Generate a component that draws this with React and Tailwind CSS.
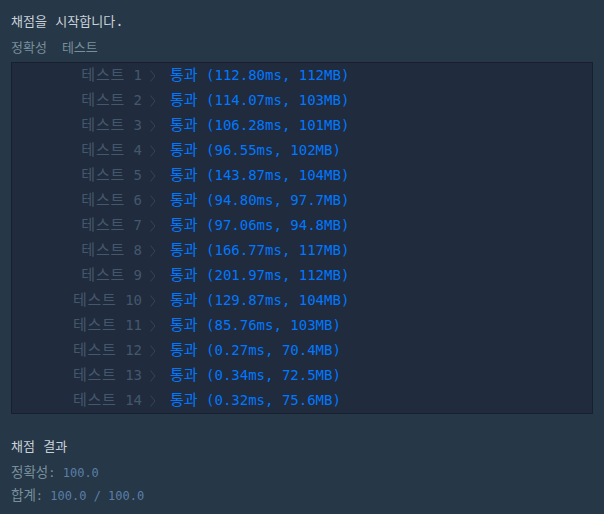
const ROWS = [
  ['1', '112.80ms, 112MB'],
  ['2', '114.07ms, 103MB'],
  ['3', '106.28ms, 101MB'],
  ['4', '96.55ms, 102MB'],
  ['5', '143.87ms, 104MB'],
  ['6', '94.80ms, 97.7MB'],
  ['7', '97.06ms, 94.8MB'],
  ['8', '166.77ms, 117MB'],
  ['9', '201.97ms, 112MB'],
  ['10', '129.87ms, 104MB'],
  ['11', '85.76ms, 103MB'],
  ['12', '0.27ms, 70.4MB'],
  ['13', '0.34ms, 72.5MB'],
  ['14', '0.32ms, 75.6MB'],
];

const Chevron = () => (
  <svg width="8" height="14" viewBox="0 0 8 14" className="shrink-0 block">
    <polyline points="1.5,1.5 6,7 1.5,12.5" fill="none" stroke="#34455a" strokeWidth="1" />
  </svg>
);

// 한글은 Noto CJK 폭이 원본보다 좁아서 조금 크게 잡음
const Ko = ({ size, children }) => <span className={size}>{children}</span>;

export default function App() {
  return (
    <div
      className="w-[604px] h-[514px] bg-[#263747] px-[11px] pt-[11px] overflow-hidden"
      style={{ fontFamily: '"DejaVu Sans Mono", "Noto Sans CJK KR", monospace' }}
    >
      <div className="text-[14px] leading-[20px] text-[#c9d2da] whitespace-pre">
        <Ko size="text-[13px]">채점을</Ko> <Ko size="text-[13px]">시작합니다</Ko>.
      </div>
      <div className="mt-[6px] flex gap-[15px] text-[13px] leading-[20px] text-[#78909c]">
        <span>정확성</span>
        <span>테스트</span>
      </div>

      {/* 테스트 결과 표 */}
      <div className="mt-[4px] w-[582px] bg-[#202b3d] border border-[#172030]">
        {ROWS.map(([n, r]) => (
          <div key={n} className="flex items-center h-[25px] text-[14px] leading-[25px] whitespace-pre">
            <span className="w-[130px] text-right text-[#44576c]">
              <Ko size="text-[15px] tracking-[0.8px]">테스트</Ko> {n}
            </span>
            <span className="ml-[7px]"><Chevron /></span>
            <span className="ml-[13px] text-[#0078ff]">
              <Ko size="text-[15px]">통과</Ko> ({r})
            </span>
          </div>
        ))}
      </div>

      <div className="mt-[22px] text-[14px] leading-[20px] text-[#c9d2da] whitespace-pre">
        <Ko size="text-[13px]">채점</Ko> <Ko size="text-[13px]">결과</Ko>
      </div>
      <div className="mt-[5px] text-[12px] leading-[20px] text-[#78909c] whitespace-pre">
        <Ko size="text-[13.5px]">정확성</Ko>: <span className="text-[#5a7fa8]">100.0</span>
      </div>
      <div className="mt-[2px] text-[12px] leading-[20px] text-[#78909c] whitespace-pre">
        <Ko size="text-[13.5px]">합계</Ko>: <span className="text-[#5a7fa8]">100.0 / 100.0</span>
      </div>
    </div>
  );
}
